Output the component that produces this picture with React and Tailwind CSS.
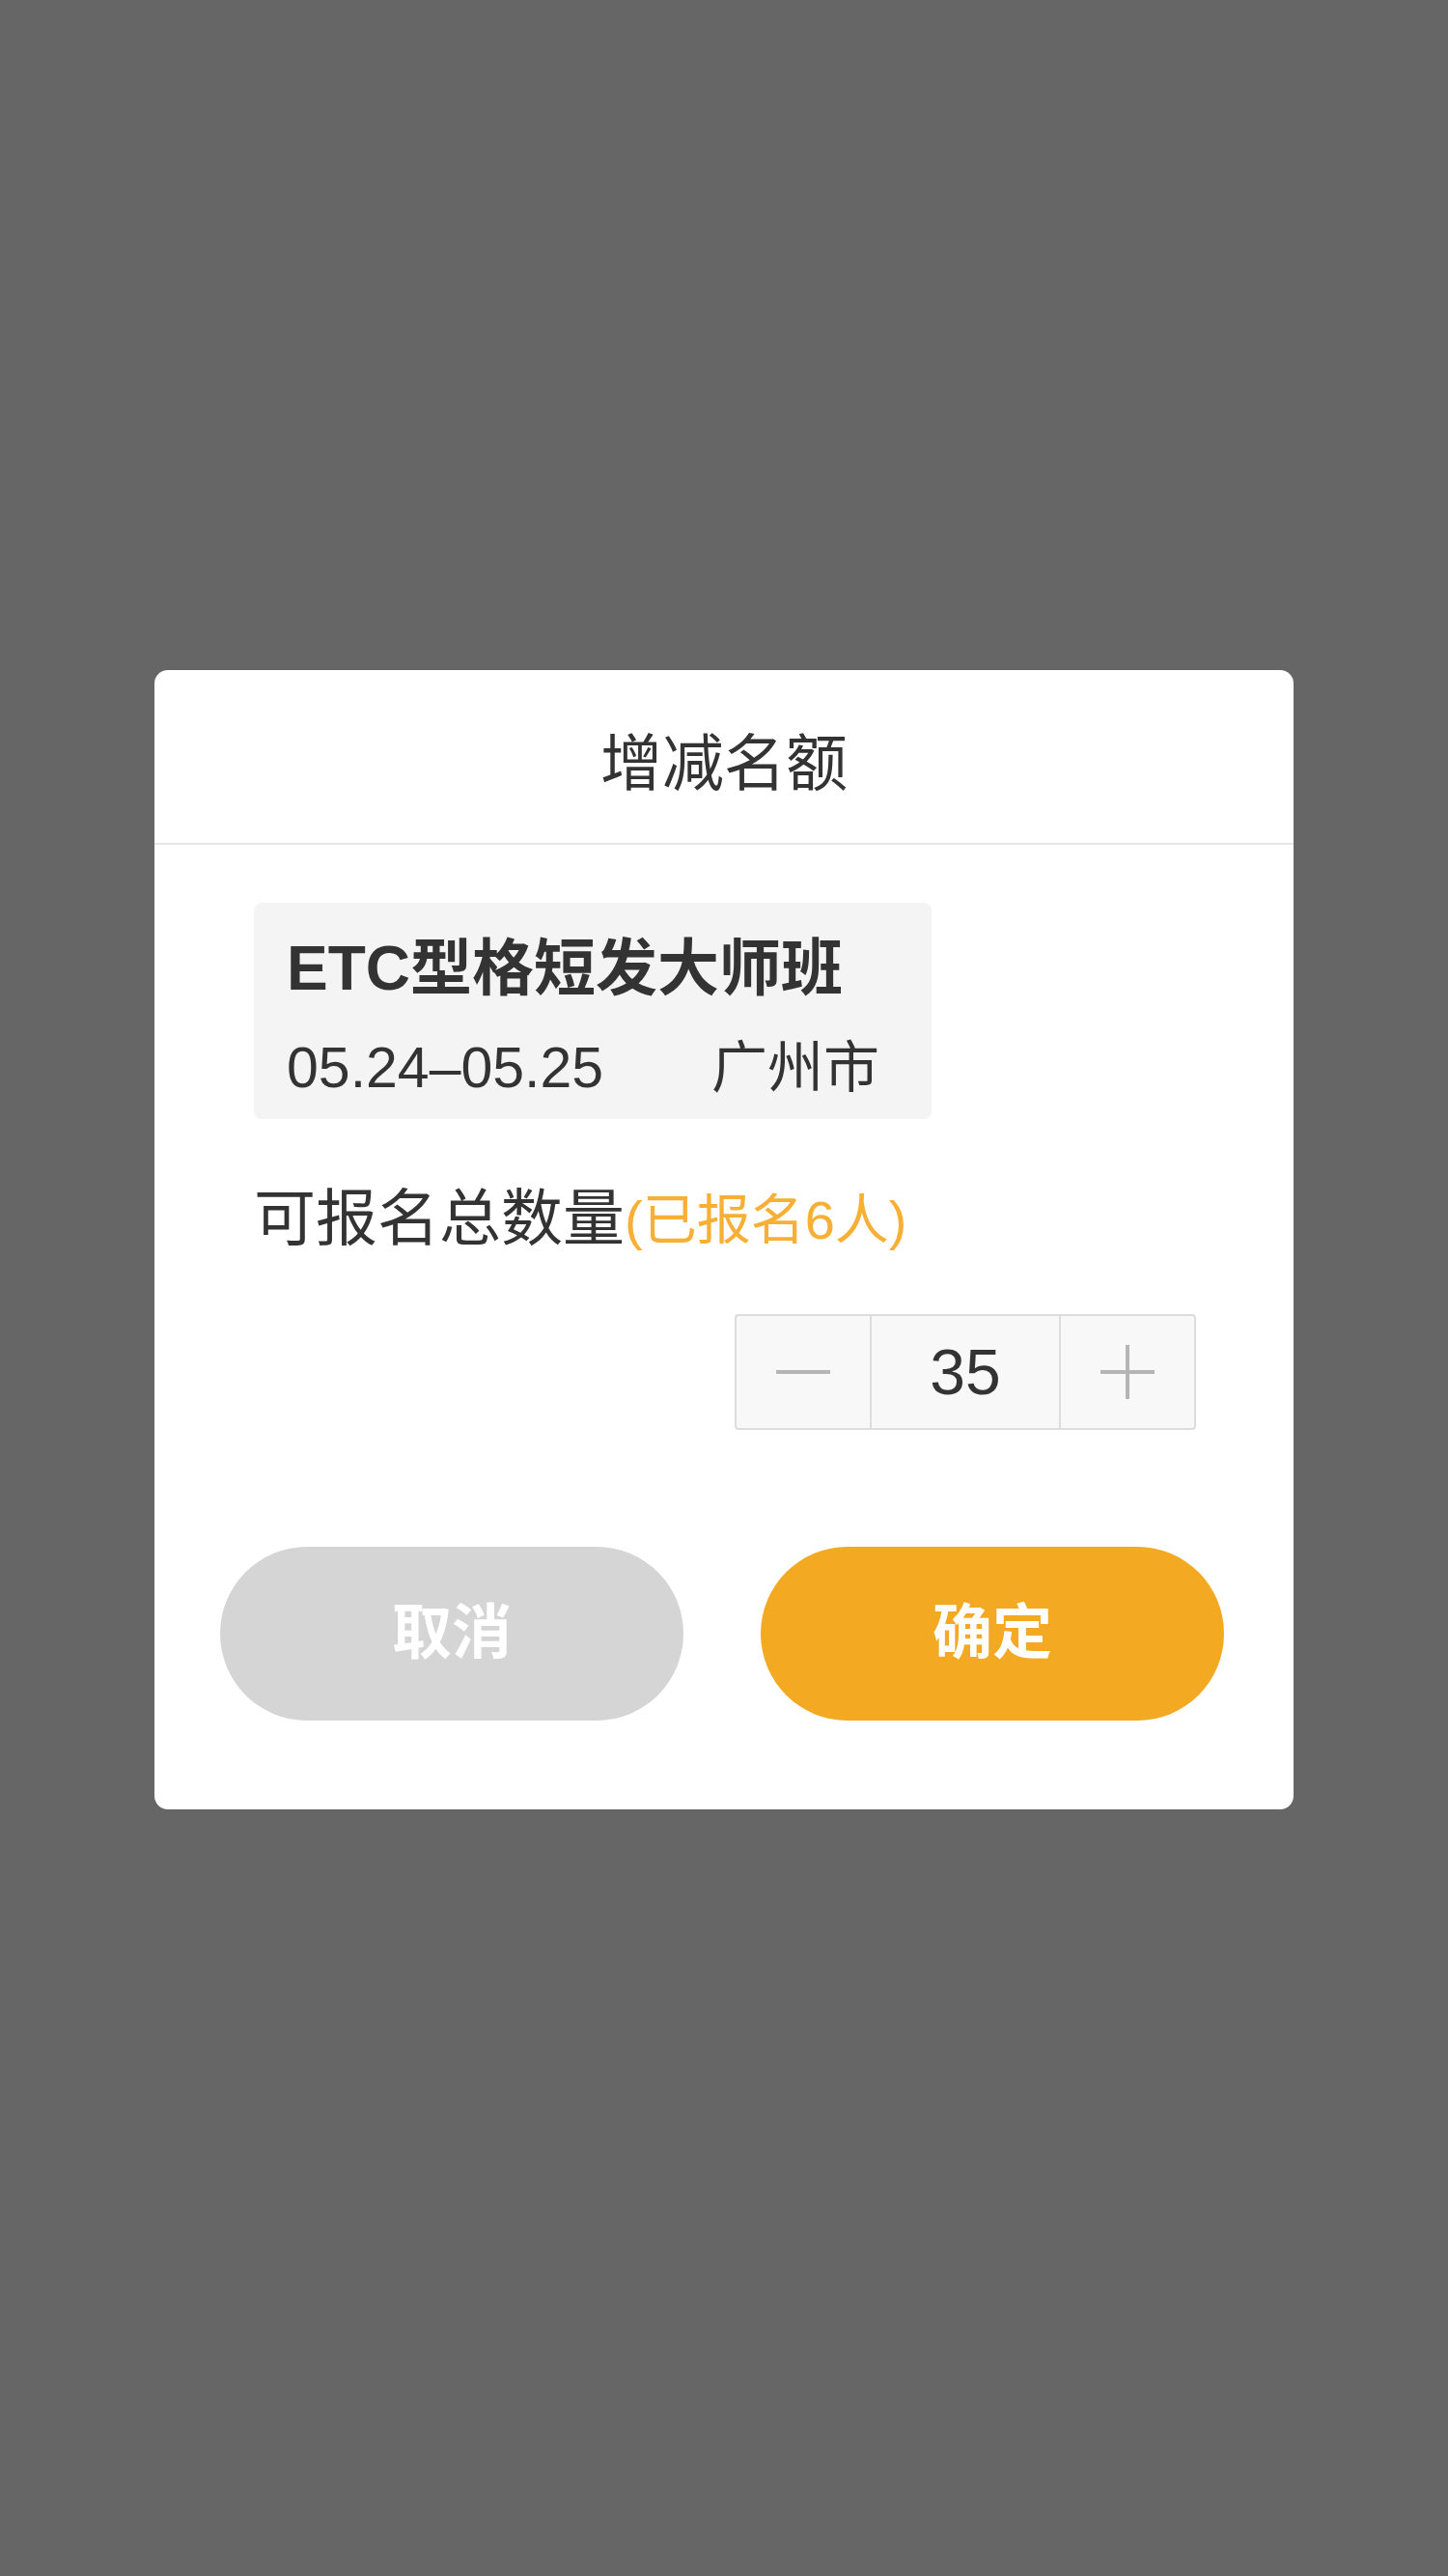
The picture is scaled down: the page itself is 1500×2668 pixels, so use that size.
import React from "react";

const FONT = { fontFamily: '"Liberation Sans", "Noto Sans CJK SC", sans-serif' };

export default function App() {
  return (
    <div
      className="w-full h-[2668px] bg-[#666666] flex justify-center items-start pt-[694px]"
      style={FONT}
    >
      <div className="w-[1180px] bg-white rounded-[14px] flex flex-col">
        <div className="h-[181px] flex items-center justify-center border-b-2 border-[#e6e6e6] pt-[14px]">
          <span className="text-[64px] leading-none text-[#333333]">增减名额</span>
        </div>

        <div className="pl-[103px] pt-[60px]">
          <div className="w-[702px] h-[224px] bg-[#f4f4f4] rounded-[8px] flex flex-col pl-[34px] pt-[28px]">
            <div className="h-[80px] flex items-center text-[64px] font-bold text-[#333333] leading-none">
              ETC型格短发大师班
            </div>
            <div className="h-[70px] mt-[28px] flex items-center text-[59px] text-[#333333] leading-none">
              <span className="w-[440px]">05.24–05.25</span>
              <span className="text-[58px]">广州市</span>
            </div>
          </div>
        </div>

        <div className="pl-[103px] mt-[63px] h-[80px] flex items-center leading-none">
          <span className="text-[#333333] text-[64px]">可报名总数量</span>
          <span className="text-[#f7b035] text-[56px] mt-[4px]">(已报名6人)</span>
        </div>

        <div className="mt-[59px] flex justify-end pr-[101px]">
          <div className="w-[478px] h-[120px] border-2 border-[#dddddd] rounded-[4px] bg-[#f8f8f8] flex">
            <div className="w-[138px] h-full flex items-center justify-center">
              <div className="w-[56px] h-[4px] bg-[#b5b5b5]" />
            </div>
            <div className="w-[198px] h-full border-x-2 border-[#dddddd] flex items-center justify-center text-[66px] text-[#333333] leading-none">
              35
            </div>
            <div className="flex-1 h-full flex items-center justify-center">
              <div className="relative w-[56px] h-[56px]">
                <div className="absolute left-0 top-[26px] w-[56px] h-[4px] bg-[#b5b5b5]" />
                <div className="absolute top-0 left-[26px] w-[4px] h-[56px] bg-[#b5b5b5]" />
              </div>
            </div>
          </div>
        </div>

        <div className="mt-[121px] pb-[92px] px-[68px] flex gap-[80px]">
          <button className="w-[480px] h-[180px] rounded-full bg-[#d5d5d5] text-white text-[62px] font-bold leading-none flex items-center justify-center">
            取消
          </button>
          <button className="w-[480px] h-[180px] rounded-full bg-[#f4a923] text-white text-[62px] font-bold leading-none flex items-center justify-center">
            确定
          </button>
        </div>
      </div>
    </div>
  );
}
